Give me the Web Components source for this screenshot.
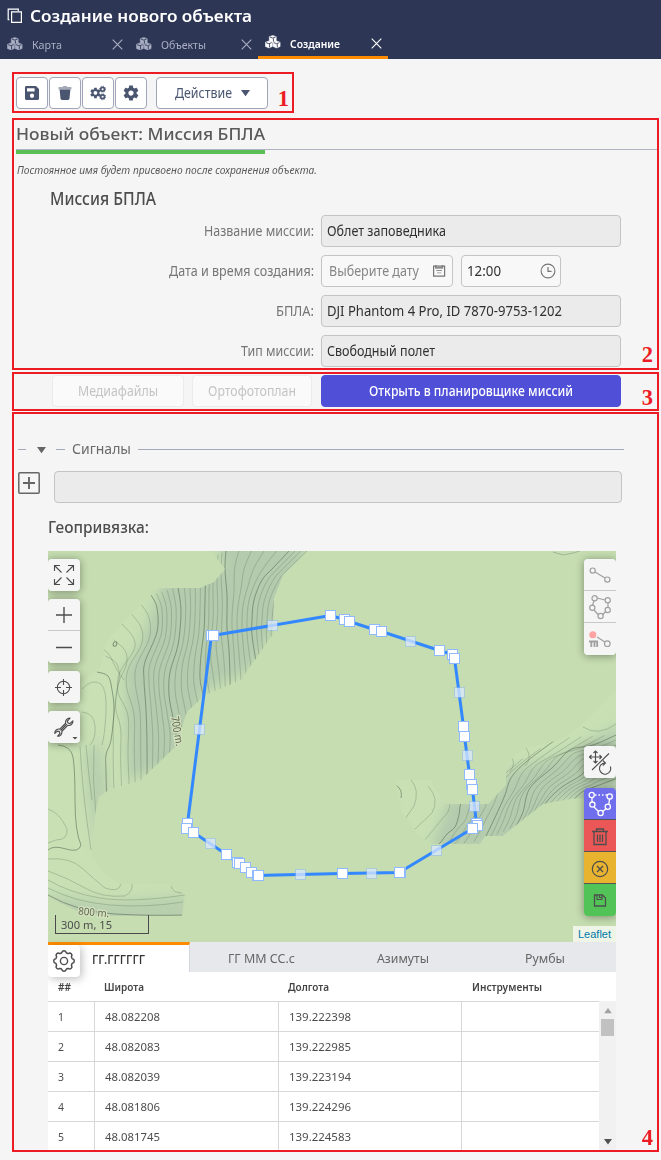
<!DOCTYPE html>
<html lang="ru">
<head>
<meta charset="utf-8">
<title>Создание нового объекта</title>
<style>
html,body{margin:0;background:#f5f5f5;font-family:"Noto Sans","Open Sans",sans-serif;color:#4d4d4d}
</style>
</head>
<body>
<mission-page></mission-page>
<script>
const define = (name, html, after) => {
  const t = document.createElement('template');
  t.innerHTML = html;
  customElements.define(name, class extends HTMLElement {
    connectedCallback() {
      if (this.shadowRoot) return;
      this.attachShadow({mode: 'open'}).append(t.content.cloneNode(true));
      if (after) after(this, this.shadowRoot);
    }
  });
};

/* ---- icons ---- */
const GEAR = 'M19.43 12.98c.04-.32.07-.64.07-.98s-.03-.66-.07-.98l2.11-1.65c.19-.15.24-.42.12-.64l-2-3.46c-.12-.22-.39-.3-.61-.22l-2.49 1c-.52-.4-1.08-.73-1.69-.98l-.38-2.65C14.46 2.18 14.25 2 14 2h-4c-.25 0-.46.18-.49.42l-.38 2.65c-.61.25-1.17.59-1.69.98l-2.49-1c-.23-.09-.49 0-.61.22l-2 3.46c-.13.22-.07.49.12.64l2.11 1.65c-.04.32-.07.65-.07.98s.03.66.07.98l-2.11 1.65c-.19.15-.24.42-.12.64l2 3.46c.12.22.39.3.61.22l2.49-1c.52.4 1.08.73 1.69.98l.38 2.65c.03.24.24.42.49.42h4c.25 0 .46-.18.49-.42l.38-2.65c.61-.25 1.17-.59 1.69-.98l2.49 1c.23.09.49 0 .61-.22l2-3.46c.12-.22.07-.49-.12-.64l-2.11-1.65z';
const HOLE = 'M12 15.5c-1.93 0-3.5-1.57-3.5-3.5s1.57-3.5 3.5-3.5 3.5 1.57 3.5 3.5-1.57 3.5-3.5 3.5z';
const cube = (x, y) => `<g transform="translate(${x} ${y})"><path d="M0-3.600 3.600-2.300V2.100L0 3.600-3.600 2.100V-2.300Z" fill="currentColor" stroke="currentColor" stroke-width=".5" stroke-linejoin="round"/><path d="M-2.900-1.900 0-.8 2.900-1.900M.7-.4V2.900" fill="none" stroke="var(--hole)" stroke-width=".9"/></g>`;
const scallop = (() => {
  let d = '';
  for (let i = 0; i <= 96; i++) {
    const a = i / 96 * Math.PI * 2, r = 9.3 + .9 * Math.tanh(2 * Math.cos(8 * a));
    d += (i ? 'L' : 'M') + (16 + r * Math.cos(a)).toFixed(2) + ' ' + (16 + r * Math.sin(a)).toFixed(2);
  }
  return d + 'Z';
})();
const line = 'fill="none" stroke="currentColor"';
const dots = pts => pts.map(p => `<circle cx="${p[0]}" cy="${p[1]}" r="2.6"/>`).join('');
const ICONS = {
  copy: [16, 16, `<path ${line} stroke-width="1.2" d="M4.6 3.9H14.4V14.4H4.6ZM2.4 11.6H1.2V1.2H11.3V3"/>`],
  cubes: [16, 14, cube(8, 4) + cube(4, 9.8) + cube(12, 9.8)],
  close: [11, 11, `<path ${line} stroke-width="1.1" d="M.7.7 10.3 10.3M10.3.7.7 10.3"/>`],
  save: [16, 16, `<path fill="currentColor" fill-rule="evenodd" d="M2 1H12L15 4V13.5Q15 15 13.5 15H2.5Q1 15 1 13.5V2.5Q1 1 2 1ZM3 3.2V6.4H10.6V3.2ZM8 8.6A2.1 2.1 0 1 0 8 12.9 2.1 2.1 0 1 0 8 8.6Z"/>`],
  trash: [16, 16, `<path fill="currentColor" opacity=".5" d="M1.6 2H5.6L6.5 1H9.5L10.4 2H14.4V4.6H1.6Z"/><path fill="currentColor" d="M2.600 4.600H13.400L12.500 13.600Q12.400 15 11 15H5Q3.600 15 3.500 13.600Z"/>`],
  gear: [24, 24, `<path fill="currentColor" fill-rule="evenodd" d="${GEAR}${HOLE}"/>`],
  gears: [16, 16, `<g transform="translate(-.8 1.700) scale(.52)"><path fill="currentColor" fill-rule="evenodd" d="${GEAR}${HOLE}"/></g><g ${line} stroke-width="1.700"><circle cx="12.600" cy="4.200" r="1.900"/><circle cx="12.600" cy="11.800" r="1.900"/></g><g ${line} stroke-width=".9" stroke-dasharray="1.100 1.250"><circle cx="12.600" cy="4.200" r="3"/><circle cx="12.600" cy="11.800" r="3"/></g>`],
  down: [10, 7, `<path fill="currentColor" d="M0 0H10L5 7Z"/>`],
  calendar: [14, 14, `<path ${line} stroke-width="1.2" d="M1.600 2.200H12.600V12.200H1.600Z"/><path fill="currentColor" d="M3 1H4.600V3H9.600V1H11.200V4.800H3ZM4.200 5.900H10V7H4.200ZM5 8.400H9.200V9.300H5Z" opacity=".8"/>`],
  clock: [16, 16, `<circle ${line} cx="8" cy="8" r="6.900" stroke-width="1.1"/><path ${line} stroke-width="1.2" d="M8 4V8.400H11.500"/>`],
  plusbox: [22, 22, `<rect ${line} x=".8" y=".8" width="20.400" height="20.400" rx="1" stroke-width="1.500"/><path ${line} stroke-width="1.900" d="M5 11H17M11 5V17"/>`],
  full: [32, 32, `<path ${line} stroke-width="1.100" d="M13.500 13.500 6.500 6.500M6.500 12V6.500H12M18.500 13.500 25.500 6.500M20 6.500H25.500V12M13.500 18.500 6.500 25.500M6.500 20V25.500H12M18.500 18.500 25.500 25.500M20 25.500H25.500V20"/>`],
  plus: [32, 32, `<path ${line} stroke-width="1.400" d="M8 16H24M16 8V24"/>`],
  minus: [32, 32, `<path ${line} stroke-width="1.400" d="M8 16.500H24"/>`],
  locate: [32, 32, `<circle ${line} cx="15.500" cy="16.500" r="6.200" stroke-width="1.100"/><path ${line} stroke-width="1.100" d="M15.500 8V14M15.500 19V25M7 16.500H13M18 16.500H24"/>`],
  wrench: [32, 32, `<g transform="translate(16 16) rotate(45)"><path ${line} stroke-width="1.200" stroke-linejoin="round" d="M-1.500 4.500V-3.800A4.100 4.100 0 0 1-2-10.500L-1.700-6.500 0-5.600 1.700-6.500 2-10.500A4.100 4.100 0 0 1 1.500-3.800V4.500A4.100 4.100 0 0 1 2 11L1.700 7.500 0 6.500-1.700 7.500-2 11A4.100 4.100 0 0 1-1.500 4.500ZM0-4V5"/></g><path fill="currentColor" d="M24.500 26H29.500L27 28.500Z"/>`],
  line: [32, 32, `<g ${line} stroke-width="1.200"><path d="M11 13 21 19"/>${dots([[8.700,11.600],[23.300,20.600]])}</g>`],
  poly: [32, 32, `<g ${line} stroke-width="1.200"><path d="M13 7 21 9M24 12V16M22 20 18.500 24M14.500 24 10 19M8.500 14.500 10 9.500"/>${dots([[10.600,7.200],[23.700,9.300],[23.700,19],[16.600,25],[8.300,16.800]])}</g>`],
  tplink: [32, 32, `<circle cx="8.800" cy="11.700" r="3.500" fill="#ffa3a3"/><g ${line} stroke-width="1.200"><path d="M13 14 21 19"/><circle cx="23.300" cy="20.700" r="2.800"/></g><path ${line} stroke-width="1.800" d="M5 18.500H9.500M7.300 18.500V24M9.500 18.500H13.800M10.500 18V24M13.200 18V24"/>`],
  rotate: [32, 32, `<g ${line} stroke-width="1.100"><path d="M11.500 5V17M5.500 11H17.500M9.500 7 11.500 5 13.500 7M9.500 15 11.500 17 13.500 15M7.500 9 5.500 11 7.500 13M15.500 9 17.500 11 15.500 13M8 24 25 7.500"/><path d="M26.300 20.500A5.600 5.600 0 1 1 21 17M18.800 14.500 21.500 17 18.800 19.500"/></g>`],
  polyw: [32, 32, `<g ${line} stroke-width="1.300"><path d="M8 10V14M10 19 14.500 23.500M18.500 23.500 22.500 20.500M24.800 16.500 25.500 11"/><path stroke-dasharray="1.500 2" d="M11 7H23"/>${dots([[7.700,7],[25.700,8.400],[8.400,16.600],[23.800,18.800],[16.600,25]])}</g>`],
  bin: [32, 32, `<path ${line} stroke-width="1.300" d="M8 11.500H24M12.500 11V9H19.500V11M10 12V24.500H22V12M13.500 14.500V22M16 14.500V22M18.500 14.500V22"/>`],
  cancel: [32, 32, `<circle ${line} cx="16" cy="17" r="7.700" stroke-width="1.200"/><path ${line} stroke-width="1.400" d="M13 14 19 20M19 14 13 20"/>`],
  floppy: [32, 32, `<path ${line} stroke-width="1.300" d="M10.500 11H18.500L21.500 14V22H10.500Z"/><path ${line} stroke-width="1.100" d="M13 11V15.500H18V11.500M15.500 11.500V13.500H17.500"/>`],
  scallop: [32, 32, `<path ${line} stroke-width="1.500" d="${scallop}"/><circle ${line} cx="16" cy="16" r="3.600" stroke-width="1.400"/>`],
};
define('ui-icon', `<style>:host{display:block;flex:none;line-height:0}</style>`, (el, root) => {
  const [w, h, body] = ICONS[el.getAttribute('name')];
  const W = +el.getAttribute('width') || w, H = W * h / w;
  root.innerHTML += `<svg width="${W}" height="${H}" viewBox="0 0 ${w} ${h}">${body}</svg>`;
});

/* Text condensed or widened to a set measure */
define('fit-text', `<style>:host{display:inline-block;white-space:nowrap;flex:none}span{display:inline-block;transform-origin:0 50%}</style><span><slot></slot></span>`, (el, root) => {
  const s = root.querySelector('span'), w = +el.getAttribute('w');
  const n = s.getBoundingClientRect().width;
  el.style.width = w + 'px';
  if (n) s.style.transform = `scaleX(${w / n})`;
});

/* Section with numbered red outline */
define('numbered-area', `<style>
:host{display:block;position:relative;box-sizing:border-box}
.f{position:absolute;inset:0;border:2px solid #ed1c24;pointer-events:none;z-index:5}
b{position:absolute;right:var(--nr,4px);bottom:var(--nb,0);font:bold 22.500px/22px "Liberation Serif",serif;color:#ed1c24}
</style><slot></slot><div class="f"><b></b></div>`, (el, root) => { root.querySelector('b').textContent = el.getAttribute('n'); });

define('nav-tab', `<style>
:host{display:flex;box-sizing:border-box;height:32px;width:129px;padding:4px 6px 0 7px;align-items:center;color:#a9afc3;font-size:11.5px;line-height:16px;--hole:#2e3656}
:host([active]){width:130px;color:#fff;font-weight:600;border-bottom:3px solid #ff8c00;padding-top:4px;padding-bottom:0}
ui-icon[name=cubes]{margin:-3px 9px 0 0}fit-text{margin-top:2px}ui-icon[name=close]{margin-left:auto;margin-top:-1px}
</style><ui-icon name="cubes" width="15.500"></ui-icon><slot></slot><ui-icon name="close"></ui-icon>`);

define('app-header', `<style>
:host{display:block;height:59px;background:#2e3656;color:#fff}
.t{display:flex;height:27px;align-items:center;padding:5px 0 0 7px;box-sizing:border-box}
.t fit-text{font-size:16px;font-weight:600;line-height:22px;margin-left:7px}
nav{display:flex}
</style>
<div class="t"><ui-icon name="copy" width="16"></ui-icon><fit-text w="222">Создание нового объекта</fit-text></div>
<nav><nav-tab><fit-text w="30">Карта</fit-text></nav-tab><nav-tab><fit-text w="45">Объекты</fit-text></nav-tab><nav-tab active><fit-text w="50">Создание</fit-text></nav-tab></nav>`);

define('tool-button', `<style>
:host{display:flex;box-sizing:border-box;height:32px;width:32px;border:1px solid #a0a6b8;border-radius:4px;background:#fff;color:#4a5570;align-items:center;justify-content:center;font-size:13.5px;gap:9px}
:host([wide]){width:112px;margin-left:8px}
</style><slot></slot>`);

define('tool-bar', `<style>:host{display:flex;gap:1px;padding:5px 4px}</style>
<tool-button><ui-icon name="save" width="16"></ui-icon></tool-button>
<tool-button><ui-icon name="trash" width="16"></ui-icon></tool-button>
<tool-button><ui-icon name="gears" width="16"></ui-icon></tool-button>
<tool-button><ui-icon name="gear" width="18"></ui-icon></tool-button>
<tool-button wide><fit-text w="57">Действие</fit-text><ui-icon name="down" width="9"></ui-icon></tool-button>`);

define('text-field', `<style>
:host{display:flex;box-sizing:border-box;width:300px;height:32px;border:1px solid #c4c4c4;border-radius:4px;background:#ebebeb;align-items:center;padding:0 5px;font-size:13.5px;line-height:20px;color:#303030}
:host([open]){background:#f8f8f8;padding-right:4px;justify-content:space-between}
</style><slot></slot>`);
define('form-row', `<style>
:host{display:grid;grid-template-columns:302px auto;column-gap:7px;height:32px;margin-bottom:8px;align-items:center;font-size:13.5px;line-height:20px;color:#757575}
.l{justify-self:end;display:flex}.f{display:flex;gap:8px}
</style><div class="l"><slot name="label"></slot></div><div class="f"><slot></slot></div>`);

define('mission-form', `<style>
:host{display:block;padding-top:1px}
.h{margin:3px 0 0 4px;width:643px;height:27px;border-bottom:1px solid #b1b4c2;font-size:16.500px;font-weight:500;line-height:24px;color:#5a5a5a}
.g{width:249px;height:4px;background:#5abf54;margin-left:4px}
.i{margin:7px 0 0 5px;height:17px;font-size:10.800px;font-style:italic;line-height:17px;color:#5a5a5a}
.s{margin:8px 0 4px 38px;height:25px;font-size:17.500px;line-height:25px;font-weight:500}
text-field.d{width:132px;color:#868686;padding-left:7px}text-field.t{width:100px}
ui-icon{color:#757575}
</style>
<div class="h"><fit-text w="249">Новый объект: Миссия БПЛА</fit-text></div><div class="g"></div>
<div class="i"><fit-text w="300">Постоянное имя будет присвоено после сохранения объекта.</fit-text></div>
<div class="s"><fit-text w="106">Миссия БПЛА</fit-text></div>
<form-row><fit-text slot="label" w="110">Название миссии:</fit-text><text-field><fit-text w="119">Облет заповедника</fit-text></text-field></form-row>
<form-row><fit-text slot="label" w="145">Дата и время создания:</fit-text><text-field open class="d"><fit-text w="90">Выберите дату</fit-text><ui-icon name="calendar" style="margin-right:2px"></ui-icon></text-field><text-field open class="t"><fit-text w="34">12:00</fit-text><ui-icon name="clock"></ui-icon></text-field></form-row>
<form-row><fit-text slot="label" w="38">БПЛА:</fit-text><text-field><fit-text w="235">DJI Phantom 4 Pro, ID 7870-9753-1202</fit-text></text-field></form-row>
<form-row><fit-text slot="label" w="73">Тип миссии:</fit-text><text-field><fit-text w="108">Свободный полет</fit-text></text-field></form-row>`);

define('action-row', `<style>
:host{display:flex;padding:3px 0 0 40px}
div{box-sizing:border-box;height:32px;display:flex;align-items:center;justify-content:center;border-radius:4px;border:1px solid #ebebeb;background:#fafafa;color:#c4c4c4;font-size:13.5px}
.a{width:132px;margin-right:8px}.b{width:120px;margin-right:9px}.c{width:300px;background:#4f4fd8;border-color:#4f4fd8;color:#fff;font-weight:500}
</style><div class="a"><fit-text w="80">Медиафайлы</fit-text></div><div class="b"><fit-text w="88">Ортофотоплан</fit-text></div><div class="c"><fit-text w="204">Открыть в планировщике миссий</fit-text></div>`);

/* ---- map ---- */
const P = s => s.trim().split(/\s+/).map(p => p.split(',').map(Number));
const smooth = pts => {
  let d = `M${pts[0]}`;
  for (let i = 0; i < pts.length - 1; i++) {
    const a = pts[i - 1] || pts[i], b = pts[i], c = pts[i + 1], e = pts[i + 2] || c;
    d += `C${(b[0] + (c[0] - a[0]) / 6).toFixed(1)} ${(b[1] + (c[1] - a[1]) / 6).toFixed(1)} ${(c[0] - (e[0] - b[0]) / 6).toFixed(1)} ${(c[1] - (e[1] - b[1]) / 6).toFixed(1)} ${c[0]} ${c[1]}`;
  }
  return d;
};
/* Contour lines: index guides with evenly interpolated lines between them */
const band = (guides, n) => {
  let out = '';
  guides.forEach((g, k) => {
    out += `<path ${g.light ? '' : 'class="ix"'} d="${smooth(g)}"/>`;
    const h = guides[k + 1], m = h && (g.light || h.light) ? 3 : n;
    if (h) for (let i = 1; i < m; i++) {
      out += `<path d="${smooth(g.map((p, j) => [0, 1].map(q => +(p[q] + (h[j][q] - p[q]) * i / m).toFixed(1))))}"/>`;
    }
  });
  return out;
};
const mid = P('122,624 133,637 134,650 120,672 118,692 128,716 128,755 130,805');
mid.light = true;
const NW = [
  P('97,672 108,676 112,690 114,710 111,740 106,755 106,773 108,840'),
  mid,
  P('151,595 157,608 157,632 145,662 144,680 146,710 147,745 147,800'),
  P('178,587 181,612 178,645 170,672 169,695 173,718 176,740 170,790'),
  P('206,560 205,600 204,630 201,655 200,678 203,695 206,715 200,740'),
  P('226,551 225,569 227,595 227,612 227,628 229,650 230,678 230,700'),
  P('290,550 273,568 262,580 254,600 252,620 252,635 256,662 260,690'),
  P('325,545 300,568 290,580 280,600 277,620 276,635 276,662 280,690')];
const SE = [
  P('434,848 440,843 447,834 455,827 459,815 461,803 470,790'),
  P('484,840 489,830 498,811 505,795 511,778 526,762 558,738'),
  P('516,826 523,812 530,788 553,767 570,750 593,745 616,735'),
  P('540,812 548,800 562,787 580,776 592,765 606,762 620,758'),
  P('560,820 568,806 582,792 594,787 602,784 610,781 620,777')];
const PTS = P('211.5,635 213,635.5 330.5,615.5 344.5,619.5 349.5,621.5 374,629.5 381.5,631.5 439.5,650.5 452.5,654.5 454.5,658.5 463.5,726.5 464.5,736.5 469.5,774.5 471.5,784.5 472.5,789.5 476.5,823.5 477.5,825.5 472.5,828.5 400,872 399.5,872.5 342.5,873.5');
const SW = P('237,862.5 239.5,863.5 245.5,867.5 251,872.5 257,875.5 258,875.5');
const END = P('226.5,854.5 193.5,832.5 186.5,828.5 187.5,823.5');
const ORDER = [...PTS, ...[...SW].reverse(), ...END];
const DRAWN = [...PTS, ...SW, END[0], END[3], END[2], END[1]];
const MID = P('272.5,625.5 410.5,641.5 459.5,692.5 467.5,755.5 474.5,806.5 436.5,850.5 371.5,873.5 300.5,874.5 210.5,843.5 199.5,729.5');
const sq = (p, o) => `<rect x="${Math.floor(p[0]) - 5}" y="${Math.floor(p[1]) - 5}" width="11" height="11" fill="#8fbaff" opacity="${o}"/><rect x="${Math.floor(p[0]) - 4}" y="${Math.floor(p[1]) - 4}" width="9" height="9" fill="#fff" opacity="${o}"/>`;

define('map-button', `<style>
:host{display:block;width:32px;height:32px;background:#f5f5f5;color:#4d4d4d;overflow:hidden}
:host([dim]){color:#a0a0a0}
</style><slot></slot>`);
define('map-group', `<style>
:host{display:flex;flex-direction:column;width:32px;border-radius:4px;overflow:hidden;box-shadow:0 1px 8px rgba(0,0,0,.38)}
</style><slot></slot>`);
define('geo-map', `<style>
:host{display:block;position:relative;width:568px;height:391px;overflow:hidden;background:#c5ddb0}
svg{display:block}
.col{position:absolute;top:8px;display:flex;flex-direction:column;gap:8px}
.l{left:0}.r{right:0;gap:0}
.sep{border-bottom:1px solid #c8c8c8;height:31px}
.dk{border-bottom:1px solid #555;height:31px}
.scale{position:absolute;left:7px;top:364px;height:18px;border:1px solid #4a4a4a;border-top:0;font-size:11px;line-height:19px;padding-left:5px;width:87px}
.leaf{position:absolute;right:0;bottom:0;width:43px;height:16px;background:rgba(255,255,255,.7);color:#0078a8;font:11px/16px "Liberation Sans",Arial,sans-serif;text-align:center}
.ix{stroke-opacity:.6}
</style>
<svg width="568" height="391" viewBox="48 551 568 391">
<defs><filter id="soft"><feGaussianBlur stdDeviation="6"/></filter>
<clipPath id="a"><path d="M205 551H211L225 569 214 582 200 588H158L147 599 125 620 106 642 100 668 84 681 60 705 48 712V897L75 910 100 916H182L185 895 170 884H120L103 872 92 855 95 815 99 797 110 789 140 781 175 747 187 712 205 695 241 680 273 634 274 598 283 575 308 551Z"/></clipPath>
<clipPath id="b"><path d="M396 782 402 780H430L445 804H488L506 785 506 768 515 755 526 748 560 740 585 722 616 690V795L570 799 543 804 520 822 503 836H485L480 844H432L418 834 402 812Z"/></clipPath></defs>
<g clip-path="url(#a)"><rect x="48" y="551" width="280" height="370" fill="#c8e0b4"/><g filter="url(#soft)" fill="#b4cbad"><path d="M165 575 140 645 125 670 128 780 180 760 205 690 250 670 285 610 310 540 215 540 225 570Z"/><path d="M85 755 100 740 108 790 98 850 88 800ZM48 895 110 902 190 895V930H48Z" opacity=".8"/></g>
<g fill="none" stroke="#5a7059" stroke-opacity=".3" id="na"></g>
<g fill="none" stroke="#5a7059" stroke-opacity=".3"><path d="M98 647Q108 650 112 660T124 680M82 689Q92 678 101 684 107 690 106 712T102 745M82 712Q94 713 95 726T90 745M80 746Q82 790 91 850M86 745Q88 770 92 800M94 745Q92 780 96 815M48 809Q60 813 67 829 68 840 56 840L48 843M48 859Q70 857 82 868T105 888Q119 893 121 884M48 871Q68 878 85 888T125 896Q133 892 132 884M48 880Q70 893 100 898T185 895M48 888Q75 902 110 905T183 902M171 886Q173 893 182 893"/><path class="ix" d="M58 745Q71 746 73 757T75 800 81 845Q79 853 66 849T48 850M48 895Q78 912 115 914T182 915"/><ellipse cx="115" cy="644" rx="1.700" ry="2.300" transform="rotate(25 115 644)" stroke-opacity=".7"/></g></g>
<g clip-path="url(#b)"><rect x="390" y="680" width="230" height="170" fill="#c8e0b4"/><path filter="url(#soft)" fill="#b4cbad" d="M430 850 450 798H490L510 770 560 755 590 740 620 725V800L560 800 500 850Z"/>
<g fill="none" stroke="#5a7059" stroke-opacity=".3" id="sb"></g>
<g fill="none" stroke="#5a7059" stroke-opacity=".3"><path class="ix" d="M396 785Q403 790 401 798"/><path d="M411 780Q420 790 414 806L405 819M428 786Q440 799 432 813L415 829M450 803Q450 812 442 819L425 840M583 727Q598 737 616 724M510 756Q517 762 510 772M526 748Q533 758 525 766"/></g></g>
<path d="M553 552 563 555 573 553 580 551" fill="none" stroke="#9fb795" stroke-width="1"/>
<g font-family="Noto Sans,sans-serif" fill="#5f6650" stroke="#d6e3c0" stroke-width="2.500" paint-order="stroke"><text font-size="11" transform="translate(171 717) rotate(80)" textLength="30" lengthAdjust="spacingAndGlyphs">700 m.</text><text font-size="10.500" transform="translate(78 914.500) rotate(5)" textLength="31" lengthAdjust="spacingAndGlyphs">800 m.</text></g>
<g id="poly"></g>
</svg>
<div class="col l">
<map-group><map-button><ui-icon name="full"></ui-icon></map-button></map-group>
<map-group><map-button class="sep"><ui-icon name="plus"></ui-icon></map-button><map-button><ui-icon name="minus"></ui-icon></map-button></map-group>
<map-group><map-button><ui-icon name="locate"></ui-icon></map-button></map-group>
<map-group><map-button><ui-icon name="wrench"></ui-icon></map-button></map-group>
</div>
<div class="col r">
<map-group><map-button dim class="sep"><ui-icon name="line"></ui-icon></map-button><map-button dim class="sep"><ui-icon name="poly"></ui-icon></map-button><map-button dim><ui-icon name="tplink"></ui-icon></map-button></map-group>
<map-group style="margin-top:91px"><map-button><ui-icon name="rotate"></ui-icon></map-button></map-group>
<map-group style="margin-top:10px"><map-button class="dk" style="background:#6f6fee;color:#fff"><ui-icon name="polyw"></ui-icon></map-button><map-button class="dk" style="background:#eb5757"><ui-icon name="bin"></ui-icon></map-button><map-button class="dk" style="background:#e8b430"><ui-icon name="cancel"></ui-icon></map-button><map-button style="background:#52c457"><ui-icon name="floppy"></ui-icon></map-button></map-group>
</div>
<div class="scale"><fit-text w="51">300 m, 15</fit-text></div><div class="leaf">Leaflet</div>`, (el, root) => {
  root.getElementById('na').innerHTML = band(NW, 5);
  root.getElementById('sb').innerHTML = band(SE, 5);
  root.getElementById('poly').innerHTML = `<polygon points="${ORDER.join(' ')}" fill="none" stroke="#3388ff" stroke-width="3" stroke-linejoin="round"/>` + MID.map(p => sq(p, .5)).join('') + DRAWN.map(p => sq(p, 1)).join('');
});

define('coord-table', `<style>
:host{display:block;position:relative;width:568px;height:209px;background:#fff;font-size:11.300px;color:#4d4d4d}
.tabs{display:grid;grid-template-columns:142px 142px 142px 142px;height:30px;font-size:13px;color:#666}
.tabs div{display:flex;align-items:center;justify-content:center;background:#e7e8ec;padding-top:2px;box-sizing:border-box}
.tabs .on{background:#fff;border-top:3px solid #ff8c00;border-right:1px solid #d6d7dc;padding-top:0;color:#333;font-weight:500}
.hd,.row{display:grid;grid-template-columns:46px 184px 183px 138px;box-sizing:border-box;align-items:center}
.hd{height:29px;width:551px;font-weight:600;font-size:11px;color:#444}
.hd span,.row span{padding-left:10px}
.body{display:flex;height:150px}
.row{height:30px;border-top:1px solid #d7d7d7;align-items:stretch}
.row span{line-height:30px;border-right:1px solid #d7d7d7;box-sizing:border-box}
.row span:nth-child(1){width:47px}.row span:nth-child(2){width:185px;padding-left:11px}.row span:nth-child(3){width:184px;padding-left:11px}.row span:last-child{border:0}
.sb{width:17px;background:#f1f1f1;display:flex;flex-direction:column;align-items:center;color:#505050}
.th{width:13px;height:17px;background:#c1c1c1;margin:5px 0 auto}
.gear{position:absolute;left:0;top:3px;width:32px;height:32px;background:#fff;border-radius:4px;box-shadow:2px 2px 8px rgba(0,0,0,.25);clip-path:inset(-9px -12px -12px 0)}
</style>
<div class="tabs"><div class="on"><fit-text w="53">ГГ.ГГГГГГ</fit-text></div><div><fit-text w="67">ГГ ММ СС.с</fit-text></div><div><fit-text w="52">Азимуты</fit-text></div><div><fit-text w="40">Румбы</fit-text></div></div>
<div class="hd"><span><fit-text w="13">##</fit-text></span><span><fit-text w="40">Широта</fit-text></span><span><fit-text w="41">Долгота</fit-text></span><span style="padding-left:11px"><fit-text w="70">Инструменты</fit-text></span></div>
<div class="body"><div class="rows"></div><div class="sb"><ui-icon name="down" width="8" style="transform:rotate(180deg);margin-top:7px;color:#a3a3a3"></ui-icon><div class="th"></div><ui-icon name="down" width="8" style="margin-bottom:6px"></ui-icon></div></div>
<div class="gear"><ui-icon name="scallop"></ui-icon></div>`, (el, root) => {
  root.querySelector('.rows').innerHTML = [['48.082208','139.222398'],['48.082083','139.222985'],['48.082039','139.223194'],['48.081806','139.224296'],['48.081745','139.224583']]
    .map((r, i) => `<div class="row"><span><fit-text w="6">${i + 1}</fit-text></span><span><fit-text w="55">${r[0]}</fit-text></span><span><fit-text w="62">${r[1]}</fit-text></span><span></span></div>`).join('');
});

define('signals-block', `<style>
:host{display:block;padding-top:27px}
.l{display:flex;align-items:center;height:20px;padding-left:6px;font-size:14px;line-height:20px;color:#6a6a6a}
i{height:1px;background:#a5a9bb;margin-top:1px}
.r{display:flex;margin-top:12px;padding-left:6px}
ui-icon{color:#666}text-field{width:568px;margin-left:14px}
</style>
<div class="l"><i style="width:8px"></i><ui-icon name="down" width="9" style="margin:2px 10px 0 11px"></ui-icon><i style="width:9px"></i><fit-text w="59" style="margin:-1px 7px 0">Сигналы</fit-text><i style="width:486px"></i></div>
<div class="r"><ui-icon name="plusbox" style="margin-top:1px"></ui-icon><text-field></text-field></div>`);

define('geo-block', `<style>:host{display:block;padding:12px 0 0 36px}.t{height:36px;line-height:24px;font-size:16.500px;font-weight:500}</style>
<div class="t"><fit-text w="101">Геопривязка:</fit-text></div><geo-map></geo-map><coord-table></coord-table>`);

define('mission-page', `<style>
:host{display:block;width:661px;height:1160px;overflow:hidden}
main{padding:13px 0 0 12px}
.n1{width:282px;height:41px;--nr:3px;--nb:1px}.n2{width:647px;height:252px;margin-top:5px;--nb:2px}.n3{width:647px;height:39px;margin-top:2px;--nb:0px}.n4{width:647px;height:740px;margin-top:1px;--nb:1px}
</style>
<app-header></app-header>
<main>
<numbered-area class="n1" n="1"><tool-bar></tool-bar></numbered-area>
<numbered-area class="n2" n="2"><mission-form></mission-form></numbered-area>
<numbered-area class="n3" n="3"><action-row></action-row></numbered-area>
<numbered-area class="n4" n="4"><signals-block></signals-block><geo-block></geo-block></numbered-area>
</main>`);
</script>
</body>
</html>
